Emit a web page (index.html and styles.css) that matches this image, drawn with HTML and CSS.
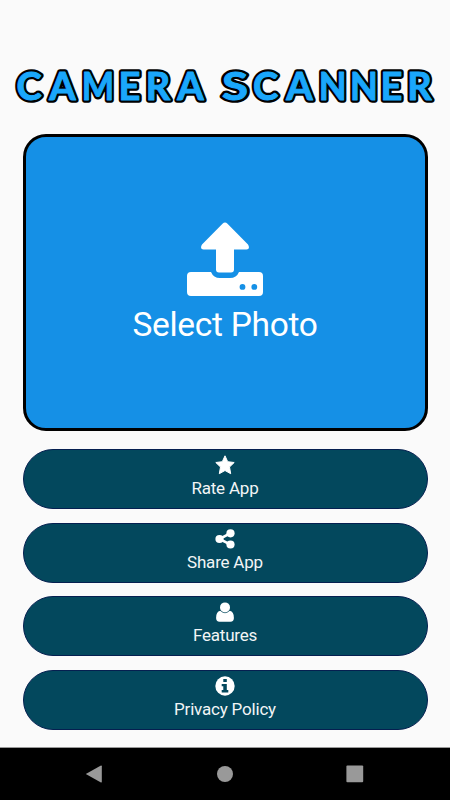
FILE: index.html
```html
<!DOCTYPE html>
<html lang="en">
<head>
<meta charset="utf-8">
<title>Camera Scanner</title>
<link rel="stylesheet" href="styles.css">
</head>
<body>
<main class="screen">
  <h1 class="title">
    <svg width="450" height="60" viewBox="1 0 450 60">
      <g class="outline" aria-hidden="true"><use href="#wordmark"/></g>
      <g class="fill">
        <g id="wordmark">
          <text y="45.300" x="30 63.500">CA</text>
          <text y="45.300" x="110" transform="scale(.9 1)">M</text>
          <text y="45.300" x="130.500 159 191.500">ERA</text>
          <text y="45.300" x="188.800" transform="scale(1.25 1)">S</text>
          <text y="45.300" x="266.500 300.500">CA</text>
          <text y="45.300" x="351.300 384.100" transform="scale(.95 1)">NN</text>
          <text y="45.300" x="392.500 420.500">ER</text>
        </g>
      </g>
    </svg>
  </h1>
  <button class="select">
    <svg width="78" height="76" viewBox="0 0 78 76" fill="#fff">
      <path d="M36.500 1.800Q39 -.6 41.500 1.800L62 22.600Q64.500 27 60.500 27.500H48V47.500Q48 50.500 45 50.500H33Q30 50.500 30 47.500V27.500H17.500Q13.500 27 16 22.600Z"/>
      <path fill-rule="evenodd" d="M5 50H25Q27.500 56 34 56H44Q50.500 56 53 50H73Q77 50 77 54V70Q77 74 73 74H5Q1 74 1 70V54Q1 50 5 50ZM56.500 62a2.900 2.900 0 1 0 0 5.800a2.900 2.900 0 0 0 0-5.800ZM68.300 62a2.900 2.900 0 1 0 0 5.800a2.900 2.900 0 0 0 0-5.800Z"/>
    </svg>
    <span>Select Photo</span>
  </button>
  <nav class="menu">
    <button class="item">
      <svg width="20" height="20" viewBox="0 0 20 20" fill="#fff" stroke="#fff" stroke-width="1" stroke-linejoin="round"><path d="M10 .8L12.700 6.700L19.200 7.500L14.500 12L15.700 18.700L10 15.500L4.300 18.700L5.500 12L.8 7.500L7.300 6.700Z"/></svg>
      <span>Rate App</span>
    </button>
    <button class="item">
      <svg width="20" height="20" viewBox="0 0 20 20" fill="#fff"><path d="M15.500 4.200L4.500 10L15.500 15.600" fill="none" stroke="#fff" stroke-width="2.600"/><circle cx="4.500" cy="10" r="4.100"/><circle cx="15.500" cy="4.300" r="4.100"/><circle cx="15.500" cy="15.500" r="4.100"/></svg>
      <span>Share App</span>
    </button>
    <button class="item">
      <svg width="20" height="20" viewBox="0 0 20 20" fill="#fff"><circle cx="10" cy="5.400" r="5"/><path d="M5.200 8.800Q10 13.500 14.800 8.800Q18.900 9.500 18.900 16Q18.900 19.700 15.500 19.700H4.500Q1.100 19.700 1.100 16Q1.100 9.500 5.200 8.800Z"/></svg>
      <span>Features</span>
    </button>
    <button class="item">
      <svg width="20" height="20" viewBox="0 0 20 20"><circle cx="10" cy="10" r="9.700" fill="#fff"/><path fill="#03485d" d="M8.300 3H11.800V6H8.300ZM6.700 8H11.800V14H13.300V16.500H6.700V14H8.300V10.300H6.700Z"/></svg>
      <span>Privacy Policy</span>
    </button>
  </nav>
</main>
<footer class="navbar">
  <svg width="18" height="18" viewBox="0 0 18 18"><path d="M.8 9L15.500 .8Q16.800 .2 16.800 1.300V16.700Q16.800 17.800 15.500 17.200Z"/></svg>
  <svg width="18" height="18" viewBox="0 0 18 18"><circle cx="9" cy="9" r="8"/></svg>
  <svg width="18" height="18" viewBox="0 0 18 18"><rect x=".4" y=".5" width="16.800" height="16.800" rx="1"/></svg>
</footer>
</body>
</html>
```
FILE: styles.css
```css
* { box-sizing: border-box; }
body {
  margin: 0;
  height: 800px;
  display: flex;
  flex-direction: column;
  background: #fafafa;
  font-family: Roboto, sans-serif;
}
.screen {
  flex: 1;
  padding: 55px 22.500px 0;
}
.title {
  margin: 0 -22.500px;
  height: 79px;
  font-family: Lato, sans-serif;
  font-size: 38px;
  font-weight: 700;
  text-anchor: middle;
}
svg { display: block; }
.outline {
  stroke: #000;
  stroke-width: 5.600px;
  stroke-linejoin: round;
}
.fill {
  fill: #1aa7fb;
  stroke: #1aa7fb;
  stroke-width: 1px;
  stroke-linejoin: round;
}
button {
  font: inherit;
  color: #fff;
  margin: 0;
  display: flex;
  flex-direction: column;
  align-items: center;
  width: 100%;
}
.select {
  height: 297px;
  padding: 85px 0 0;
  border: 3px solid #000;
  border-radius: 23px;
  background: #1590e6;
  font-size: 33.500px;
  line-height: 40px;
  letter-spacing: -.3px;
}
.select span { margin-top: 7px; }
.menu {
  display: flex;
  flex-direction: column;
  gap: 13.500px;
  padding: 18px 0 0;
}
.item {
  height: 60px;
  padding: 5px 0 0;
  border: 1px solid #051f50;
  border-radius: 30px;
  background: #03485d;
  font-size: 17px;
  line-height: 22px;
  letter-spacing: -.2px;
}
.item span { margin-top: 2px; color: #f2f5f6; }
.navbar {
  height: 53px;
  padding: 0 86px 0 85px;
  display: flex;
  align-items: center;
  justify-content: space-between;
  border-top: 1px solid #999;
  background: #000;
  fill: #999;
}
```
